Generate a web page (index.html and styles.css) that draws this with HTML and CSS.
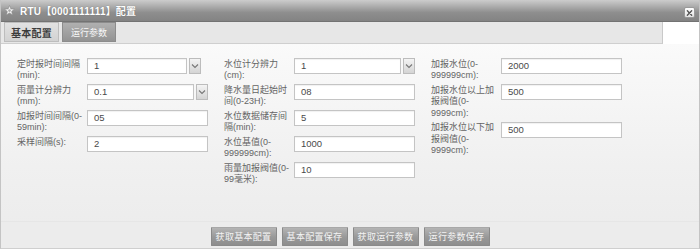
FILE: index.html
```html
<!DOCTYPE html>
<html lang="zh">
<head>
<meta charset="utf-8">
<title>RTU配置</title>
<link rel="stylesheet" href="styles.css">
</head>
<body>
<div class="win">
  <div class="titlebar">
    <svg class="star" width="11" height="11" viewBox="0 0 11 11"><polygon points="5.5,0.5 6.9,3.9 10.5,4.1 7.7,6.4 8.6,10 5.5,8 2.4,10 3.3,6.4 0.5,4.1 4.1,3.9" fill="#f2f2f2" stroke="#8a8a8a" stroke-width="0.6"/><circle cx="5.5" cy="5.6" r="1.3" fill="#a8a8a8"/></svg>
    <span class="title">RTU【0001111111】配置</span>
    <span class="close"><svg width="10" height="10" viewBox="0 0 10 10"><path d="M2.6 2.6 L7.4 7.4 M7.4 2.6 L2.6 7.4" stroke="#555" stroke-width="1.5" stroke-linecap="round"/></svg></span>
  </div>
  <div class="tabbar">
    <div class="tabstrip">
      <div class="tab tab-a">基本配置</div>
      <div class="tab tab-b">运行参数</div>
    </div>
    <div class="tabrest"></div>
  </div>
  <div class="content">
    <div class="cols">
      <div class="col">
        <div class="row"><span class="lbl">定时报时间间隔(min):</span><div class="sel sel-narrow"><span class="field">1</span><span class="arrow"><svg width="8" height="6" viewBox="0 0 8 6"><path d="M1 1.5 L4 4.5 L7 1.5" fill="none" stroke="#777" stroke-width="1.1"/></svg></span></div></div>
        <div class="row"><span class="lbl">雨量计分辨力(mm):</span><div class="sel"><span class="field">0.1</span><span class="arrow"><svg width="8" height="6" viewBox="0 0 8 6"><path d="M1 1.5 L4 4.5 L7 1.5" fill="none" stroke="#777" stroke-width="1.1"/></svg></span></div></div>
        <div class="row"><span class="lbl">加报时间间隔(0-59min):</span><span class="field inp">05</span></div>
        <div class="row"><span class="lbl">采样间隔(s):</span><span class="field inp">2</span></div>
      </div>
      <div class="col">
        <div class="row"><span class="lbl">水位计分辨力(cm):</span><div class="sel"><span class="field">1</span><span class="arrow"><svg width="8" height="6" viewBox="0 0 8 6"><path d="M1 1.5 L4 4.5 L7 1.5" fill="none" stroke="#777" stroke-width="1.1"/></svg></span></div></div>
        <div class="row"><span class="lbl">降水量日起始时间(0-23H):</span><span class="field inp">08</span></div>
        <div class="row"><span class="lbl">水位数据储存间隔(min):</span><span class="field inp">5</span></div>
        <div class="row"><span class="lbl">水位基值(0-999999cm):</span><span class="field inp">1000</span></div>
        <div class="row"><span class="lbl">雨量加报阀值(0-99毫米):</span><span class="field inp">10</span></div>
      </div>
      <div class="col">
        <div class="row"><span class="lbl">加报水位(0-999999cm):</span><span class="field inp">2000</span></div>
        <div class="row"><span class="lbl">加报水位以上加报阀值(0-9999cm):</span><span class="field inp">500</span></div>
        <div class="row"><span class="lbl">加报水位以下加报阀值(0-9999cm):</span><span class="field inp">500</span></div>
      </div>
    </div>
    <div class="footer">
      <button class="btn">获取基本配置</button>
      <button class="btn">基本配置保存</button>
      <button class="btn">获取运行参数</button>
      <button class="btn">运行参数保存</button>
    </div>
  </div>
</div>
</body>
</html>
```
FILE: styles.css
```css
* { box-sizing: border-box; }
html, body { margin: 0; padding: 0; }
body {
  width: 700px;
  height: 249px;
  overflow: hidden;
  font-family: "Liberation Sans", "Noto Sans CJK SC", sans-serif;
  background: #fff;
}
.win {
  width: 700px;
  height: 249px;
  display: flex;
  flex-direction: column;
  border-left: 1px solid #c4c4c4;
  border-right: 1px solid #c4c4c4;
  border-bottom: 1px solid #cfcfcf;
}
.titlebar {
  height: 22px;
  flex: none;
  display: flex;
  align-items: center;
  padding: 0 4px 0 3px;
  background: linear-gradient(#cccccc 0%, #adadad 30%, #8e8e8e 60%, #838383 100%);
  border-bottom: 1px solid #737373;
}
.star { flex: none; margin-right: 5px; }
.title {
  color: #fff;
  font-weight: bold;
  font-size: 10px;
  letter-spacing: 0.2px;
  text-shadow: 0 0 1px #666;
}
.close {
  margin-left: auto;
  width: 11px;
  height: 11px;
  display: flex;
  align-items: center;
  justify-content: center;
  background: linear-gradient(#ffffff, #e4e4e4);
  border: 1px solid #9a9a9a;
  border-radius: 2px;
  margin-top: 4px;
}
.tabbar {
  height: 22px;
  flex: none;
  display: flex;
}
.tabstrip {
  width: 662px;
  display: flex;
  align-items: flex-end;
  gap: 3px;
  padding-left: 3px;
  background: #e7e7e7;
  border-right: 1px solid #c9c9c9;
  border-bottom: 1px solid #cfcfcf;
}
.tabrest { flex: 1; background: #fff; }
.tab {
  height: 20px;
  display: flex;
  align-items: center;
  justify-content: center;
  margin-bottom: 1px;
}
.tab-a {
  width: 55px;
  background: linear-gradient(#e2e2e2, #d2d2d2);
  border: 1px solid #bdbdbd;
  color: #3c3c3c;
  font-weight: bold;
  font-size: 10px;
  letter-spacing: 0.3px;
}
.tab-b {
  width: 54px;
  background: linear-gradient(#b0b0b0, #939393);
  border: 1px solid #8c8c8c;
  color: #f7f7f7;
  font-size: 9px;
}
.content {
  flex: 1;
  display: flex;
  flex-direction: column;
  background: linear-gradient(#fafafa 0%, #f0f0f0 60%, #ebebeb 100%);
}
.cols {
  display: flex;
  gap: 16px;
  padding: 14px 0 0 16px;
}
.col {
  width: 191px;
  display: flex;
  flex-direction: column;
  gap: 2.5px;
}
.row {
  display: flex;
  align-items: flex-start;
}
.lbl {
  width: 70px;
  flex: none;
  padding-right: 1px;
  padding-top: 0.5px;
  font-size: 9px;
  line-height: 11.5px;
  color: #646464;
}
.field {
  display: block;
  height: 16px;
  background: #fff;
  border: 1px solid #c4c4c4;
  box-shadow: inset 0 1px 1px rgba(0,0,0,0.06);
  padding-left: 6px;
  font-size: 9.5px;
  line-height: 14px;
  color: #4a4a4a;
}
.inp { width: 121px; }
.sel {
  width: 121px;
  display: flex;
  gap: 2px;
}
.sel-narrow { width: 114px; }
.sel .field { flex: 1; }
.arrow {
  width: 12px;
  height: 16px;
  flex: none;
  display: flex;
  align-items: center;
  justify-content: center;
  background: linear-gradient(#f4f4f4, #d4d4d4);
  border: 1px solid #bcbcbc;
}
.footer {
  margin-top: auto;
  height: 27px;
  display: flex;
  justify-content: center;
  align-items: flex-start;
  gap: 5px;
  padding-top: 5px;
  border-top: 1px solid #e6e6e6;
  background: #ececec;
}
.btn {
  width: 66px;
  height: 19px;
  padding: 0;
  margin: 0;
  font-family: "Liberation Sans", "Noto Sans CJK SC", sans-serif;
  font-size: 9px;
  letter-spacing: 0.3px;
  color: #f3f3f3;
  background: linear-gradient(#b4b4b4, #989898 55%, #8e8e8e);
  border: 1px solid #8a8a8a;
  border-top-color: #a8a8a8;
  border-radius: 1px;
}
```
